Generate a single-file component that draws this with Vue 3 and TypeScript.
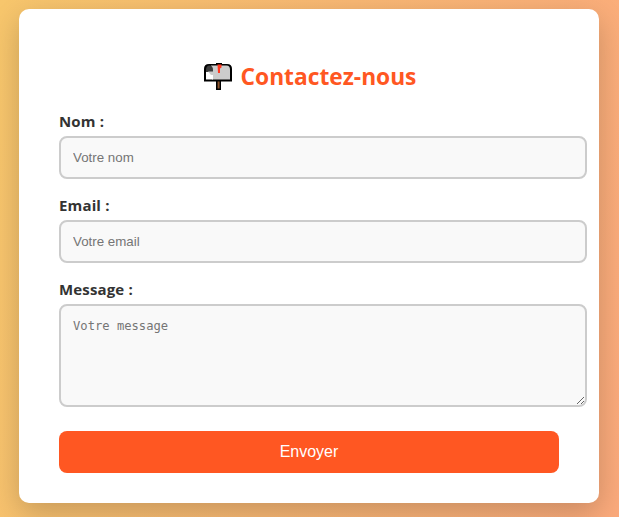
<script setup lang="ts">
import { ref } from 'vue'

const nom = ref('')
const email = ref('')
const message = ref('')
</script>

<template>
  <main class="page">
    <section class="card">
      <h2 class="title">
        <svg class="mailbox" viewBox="0 0 28 27" aria-hidden="true">
          <path d="M12 17h5v10h-5z" fill="#000" />
          <path d="M13.6 18h2v7.500h-2z" fill="#8e562e" />
          <path d="M5 1h18q5 0 5 5v12.500H0V6q0-5 5-5z" fill="#000" />
          <path d="M12 0h6v2h-6z" fill="#000" />
          <path d="M7 2.500h15.500q3.500 0 3.500 4V16.500H8z" fill="#ccc" />
          <path d="M2 7q0-4.500 3.500-4.500T9 7v2H2z" fill="#3d3d3d" />
          <path d="M2 9h7v7.500H2z" fill="#fff" />
          <path d="M4 8.500h5V12H7z" fill="#ccc" />
          <path d="M13.500 1.500h4v3l-1.500 1V10h-2z" fill="#ff3820" />
        </svg>
        <span>Contactez-nous</span>
      </h2>
      <form @submit.prevent>
        <label for="nom">Nom :</label>
        <input id="nom" v-model="nom" type="text" placeholder="Votre nom" />
        <label for="email">Email :</label>
        <input id="email" v-model="email" type="email" placeholder="Votre email" />
        <label for="message">Message :</label>
        <textarea id="message" v-model="message" placeholder="Votre message"></textarea>
        <button type="submit">Envoyer</button>
      </form>
    </section>
  </main>
</template>

<style>
body {
  margin: 0;
}
</style>

<style scoped>
.page {
  box-sizing: border-box;
  height: 517px;
  padding: 9px 20px 14px 19px;
  overflow: hidden;
  background: linear-gradient(100deg, #f7c66c, #fbaa7c);
  font-family: "Segoe UI", "Open Sans", "Noto Sans", sans-serif;
}
.card {
  box-sizing: border-box;
  height: 494px;
  padding: 49px 40px 30px;
  background: #fff;
  border-radius: 10px;
  box-shadow: 0 10px 30px rgba(0, 0, 0, 0.2);
}
.title {
  display: flex;
  align-items: center;
  justify-content: center;
  gap: 9px;
  height: 36px;
  margin: 0 0 17px;
  padding-left: 2px;
  color: #ff5722;
  font-size: 22.75px;
  line-height: 36px;
  font-weight: 700;
}
.title span {
  padding-top: 2px;
}
.mailbox {
  width: 28px;
  height: 27px;
  margin-top: 1px;
}
form {
  display: flex;
  flex-direction: column;
}
label {
  height: 20px;
  margin-bottom: 5px;
  color: #333;
  font-size: 15px;
  font-weight: 700;
  letter-spacing: 0.15px;
  line-height: 20px;
}
input,
textarea {
  box-sizing: border-box;
  width: 528px;
  margin: 0 0 16px;
  padding: 12px;
  border: 2px solid #ccc;
  border-radius: 8px;
  background: #f9f9f9;
  font-family: "Liberation Sans", Arial, sans-serif;
  font-size: 13.333px;
  outline: none;
}
input {
  height: 43px;
}
textarea {
  height: 103px;
  margin-bottom: 24px;
  font-family: "DejaVu Sans Mono", monospace;
  font-size: 12.17px;
  line-height: 17px;
  resize: vertical;
}
input::placeholder,
textarea::placeholder {
  color: #757575;
}
button {
  height: 42px;
  padding: 0;
  border: 0;
  border-radius: 8px;
  background: #ff5722;
  color: #fff;
  font-family: "Liberation Sans", Arial, sans-serif;
  font-size: 16px;
}
</style>
